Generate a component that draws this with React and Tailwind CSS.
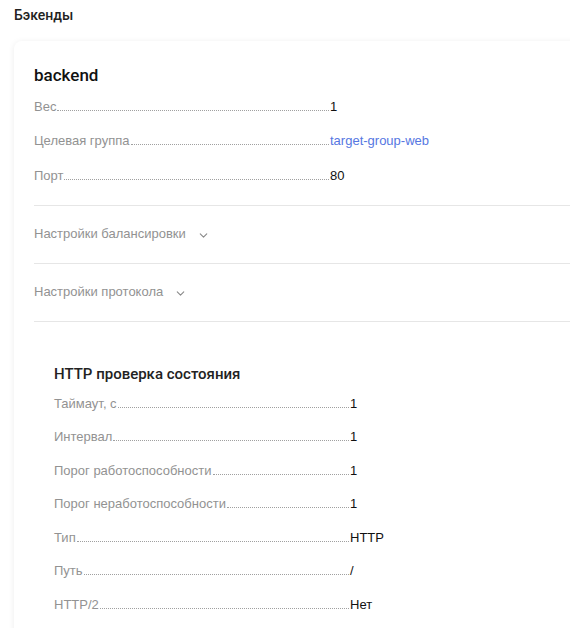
import { ChevronDown } from 'lucide-react'

const MAIN = [
  { label: 'Вес', value: '1' },
  { label: 'Целевая группа', value: 'target-group-web', link: true },
  { label: 'Порт', value: '80' },
]

const CHECK = [
  { label: 'Таймаут, с', value: '1' },
  { label: 'Интервал', value: '1' },
  { label: 'Порог работоспособности', value: '1' },
  { label: 'Порог неработоспособности', value: '1' },
  { label: 'Тип', value: 'HTTP' },
  { label: 'Путь', value: '/' },
  { label: 'HTTP/2', value: 'Нет' },
]

function Row({ label, value, link, h }) {
  return (
    <div className={`flex items-center ${h}`}>
      <div className="flex w-[296px] items-baseline">
        <span className="text-[#929292]">{label}</span>
        <span className="mx-[1px] flex-1 border-b border-dotted border-[#a0a0a0]" />
      </div>
      <span className={link ? 'text-[#5677e2]' : 'text-[#111]'}>{value}</span>
    </div>
  )
}

function Toggle({ title }) {
  return (
    <div className="flex h-[58px] items-center gap-[11px] border-b border-[#e6e6e6] text-[#929292]">
      <span>{title}</span>
      <ChevronDown size={13} strokeWidth={2} className="mt-[3px] text-[#8a8a8a]" />
    </div>
  )
}

export default function App() {
  return (
    <div className="h-[628px] w-[570px] overflow-hidden bg-white text-[13px] text-[#111] [font-family:'Liberation_Sans',Arial,sans-serif]">
      <div className="px-[14px] pt-[5px] text-[14px] font-medium leading-[20px] text-[#222] [font-family:Roboto,sans-serif]">Бэкенды</div>

      <div className="ml-[14px] mt-[16px] w-[620px] rounded-[8px] bg-white pl-[20px] pt-[22px] pb-[40px] shadow-[0_1px_6px_rgba(0,0,0,0.08)]">
        <h2 className="text-[17px] font-medium leading-[24px] text-[#111] [font-family:Roboto,sans-serif]">backend</h2>
        <div className="pt-[2px] pb-[12px]">
          {MAIN.map(r => <Row key={r.label} {...r} h="h-[34.5px]" />)}
        </div>

        <div className="border-t border-[#e6e6e6]">
          <Toggle title="Настройки балансировки" />
          <Toggle title="Настройки протокола" />
        </div>

        <div className="pl-[20px] pt-[41px]">
          <h3 className="text-[15px] font-medium leading-[22px] text-[#222] [font-family:Roboto,sans-serif]">HTTP проверка состояния</h3>
          <div className="pt-[2px]">
            {CHECK.map(r => <Row key={r.label} {...r} h="h-[33.5px]" />)}
          </div>
        </div>
      </div>
    </div>
  )
}
